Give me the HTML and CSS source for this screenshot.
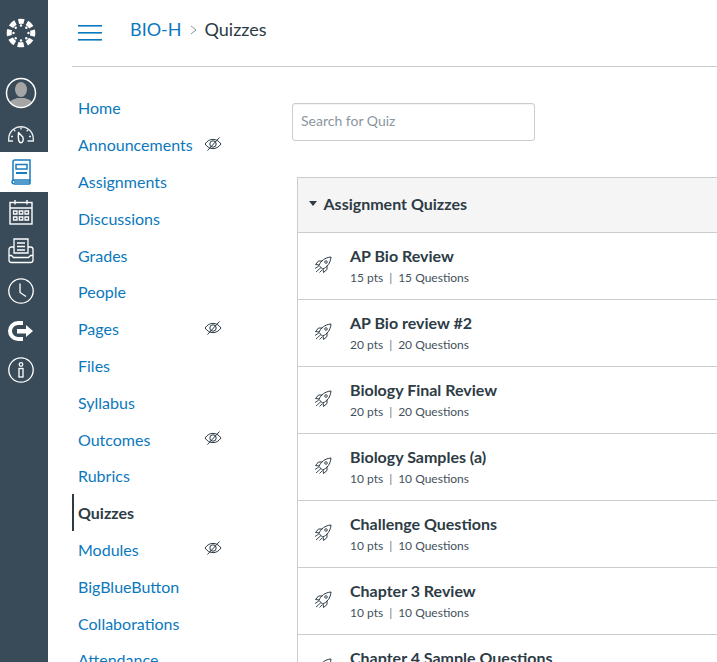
FILE: index.html
```html
<!DOCTYPE html>
<html lang="en">
<head>
<meta charset="utf-8">
<title>Quizzes</title>
<link rel="stylesheet" href="styles.css">
</head>
<body>
<svg class="defs" width="0" height="0" aria-hidden="true">
  <symbol id="eye" viewBox="0 0 18 16">
    <path d="M1 8C3.500 4.600 6 3.400 9 3.400S14.500 4.600 17 8C14.500 11.400 12 12.600 9 12.600S3.500 11.400 1 8Z" fill="none" stroke="#2d3b45" stroke-width="1"/>
    <circle cx="9" cy="8" r="3.200" fill="none" stroke="#2d3b45" stroke-width="1"/>
    <path d="M3.500 14.500L15.500 1.500" fill="none" stroke="#2d3b45" stroke-width="1"/>
  </symbol>
  <symbol id="rocket" viewBox="0 0 18 18">
    <path d="M5 9.500C6.500 5 11 1.500 17 1C16.500 7 13 11.500 8.500 13Z" fill="none" stroke="#2d3b45" stroke-width="1" stroke-linejoin="round"/>
    <path d="M5.200 9L1.500 8.500L4.500 5L8.300 5M9 12.800L9.500 16.500L13 13.500L13 9.700" fill="none" stroke="#2d3b45" stroke-width="1" stroke-linejoin="round"/>
    <circle cx="12" cy="6" r="1.300" fill="none" stroke="#2d3b45" stroke-width="0.900"/>
    <path d="M1 12.500L4.800 10M2 16L7 11.500M5.500 16.500L8 14" fill="none" stroke="#2d3b45" stroke-width="0.900"/>
  </symbol>
</svg>

<nav class="rail">
  <div class="rail-logo">
    <svg width="30" height="30" viewBox="0 0 30 30">
      <circle cx="15" cy="15" r="11.800" fill="none" stroke="#fff" stroke-width="5" stroke-dasharray="6.100 3.170" stroke-dashoffset="3.050" transform="rotate(-90 15 15)"/>
      <g fill="#fff">
        <circle cx="15" cy="7.500" r="1.200"/><circle cx="20.300" cy="9.700" r="1.200"/><circle cx="22.500" cy="15" r="1.200"/><circle cx="20.300" cy="20.300" r="1.200"/><circle cx="15" cy="22.500" r="1.200"/><circle cx="9.700" cy="20.300" r="1.200"/><circle cx="7.500" cy="15" r="1.200"/><circle cx="9.700" cy="9.700" r="1.200"/>
      </g>
    </svg>
  </div>
  <div class="rail-avatar">
    <svg width="32" height="32" viewBox="0 0 32 32">
      <defs><clipPath id="av"><circle cx="16" cy="16" r="14"/></clipPath></defs>
      <circle cx="16" cy="16" r="14" fill="#394b58"/>
      <g clip-path="url(#av)" fill="#a5a5a5">
        <ellipse cx="16" cy="12.500" rx="6" ry="7.500"/>
        <path d="M3 32C3 24 7 23 12 21L20 21C25 23 29 24 29 32Z"/>
      </g>
      <circle cx="16" cy="16" r="14.500" fill="none" stroke="#fff" stroke-width="1.500"/>
    </svg>
  </div>
  <div class="rail-item rail-dash">
    <svg width="28" height="20" viewBox="0 0 28 20" fill="none" stroke="#e8ebed" stroke-width="1.400">
      <path d="M6 17H1.700V15A12.300 12.300 0 0 1 26.300 15V17H20.500"/>
      <path d="M11.500 8.500L15.800 13C17 16 15.500 18.800 14 18.800C12 18.800 10.800 16 11.500 8.500Z" stroke-linejoin="round" stroke="#fff"/>
      <path d="M14 3.500V5.500M7 6L8.300 7.300M21 6L19.700 7.300M4 12.500H6M22 12.500H24"/>
    </svg>
  </div>
  <div class="rail-item rail-active">
    <svg width="22" height="26" viewBox="0 0 22 26" fill="none" stroke="#1a7cbd" stroke-width="1.500">
      <path d="M3 21V3C3 1.800 3.800 1 5 1H20V21H5C3.500 21 2 21.500 2 23S3.500 25 5 25H20"/>
      <path d="M20 21V25M4 23H20"/>
      <rect x="6" y="5.500" width="11" height="4.500" stroke-width="1.500"/>
      <path d="M6 14H17" stroke-width="2"/>
    </svg>
  </div>
  <div class="rail-item">
    <svg width="24" height="26" viewBox="0 0 24 26" fill="none" stroke="#fff" stroke-width="1.400">
      <rect x="1" y="3.500" width="22" height="21.500"/>
      <path d="M1 9H23M6 1V5.500M18 1V5.500"/>
      <g stroke-width="1.300">
        <path d="M4.500 12h3.500v3h-3.500zM10.300 12h3.500v3h-3.500zM16 12h3.500v3h-3.500zM4.500 18h3.500v3h-3.500zM10.300 18h3.500v3h-3.500zM16 18h3.500v3h-3.500z"/>
      </g>
    </svg>
  </div>
  <div class="rail-item">
    <svg width="26" height="26" viewBox="0 0 26 26" fill="none" stroke="#fff" stroke-width="1.300">
      <path d="M6 1H20V15H6Z"/>
      <path d="M9 5H17M9 8.500H17M9 12H17"/>
      <path d="M6 9H3.500C2 9 1 10 1 11.500V22C1 23.500 2 24.500 3.500 24.500H22.500C24 24.500 25 23.500 25 22V11.500C25 10 24 9 22.500 9H20"/>
      <path d="M1 17.500H3.500L5.500 19.500H20.500L22.500 17.500H25"/>
    </svg>
  </div>
  <div class="rail-item">
    <svg width="26" height="26" viewBox="0 0 26 26" fill="none" stroke="#fff" stroke-width="1.300">
      <circle cx="13" cy="13" r="12.200"/>
      <path d="M12 5.500V14.500L18 18.500"/>
    </svg>
  </div>
  <div class="rail-item">
    <svg width="26" height="22" viewBox="0 0 26 22">
      <path d="M15 3H10A8 8 0 0 0 10 19H15" fill="none" stroke="#fff" stroke-width="4"/>
      <path d="M9 9H18V5L25 11L18 17V13.500H9Z" fill="#fff"/>
    </svg>
  </div>
  <div class="rail-item">
    <svg width="26" height="26" viewBox="0 0 26 26" fill="none" stroke="#fff" stroke-width="1.300">
      <circle cx="13" cy="13" r="12.200"/>
      <circle cx="13" cy="7.500" r="1.800"/>
      <rect x="11" y="11.500" width="4" height="8.500"/>
    </svg>
  </div>
</nav>

<div class="main">
  <header class="topbar">
    <svg class="burger" width="24" height="16" viewBox="0 0 24 16" fill="#0c78bd">
      <rect y="0" width="24" height="1.600"/><rect y="7" width="24" height="1.600"/><rect y="14" width="24" height="1.600"/>
    </svg>
    <div class="crumbs">
      <a class="crumb-link">BIO-H</a>
      <svg class="crumb-sep" width="7" height="10" viewBox="0 0 7 10" fill="none" stroke="#8b969e" stroke-width="1"><path d="M1 1L6 5L1 9"/></svg>
      <span class="crumb-cur">Quizzes</span>
    </div>
  </header>
  <div class="body">
    <ul class="coursenav">
      <li class="nav-item">Home</li>
      <li class="nav-item">Announcements<svg class="eye" width="18" height="16"><use href="#eye"/></svg></li>
      <li class="nav-item">Assignments</li>
      <li class="nav-item">Discussions</li>
      <li class="nav-item">Grades</li>
      <li class="nav-item">People</li>
      <li class="nav-item">Pages<svg class="eye" width="18" height="16"><use href="#eye"/></svg></li>
      <li class="nav-item">Files</li>
      <li class="nav-item">Syllabus</li>
      <li class="nav-item">Outcomes<svg class="eye" width="18" height="16"><use href="#eye"/></svg></li>
      <li class="nav-item">Rubrics</li>
      <li class="nav-item nav-current">Quizzes</li>
      <li class="nav-item">Modules<svg class="eye" width="18" height="16"><use href="#eye"/></svg></li>
      <li class="nav-item">BigBlueButton</li>
      <li class="nav-item">Collaborations</li>
      <li class="nav-item">Attendance</li>
    </ul>
    <section class="content">
      <input class="search" type="text" placeholder="Search for Quiz">
      <div class="panel">
        <div class="panel-head">
          <svg class="caret" width="8" height="5" viewBox="0 0 8 5"><path d="M0 0H8L4 5Z" fill="#2d3b45"/></svg>
          <span>Assignment Quizzes</span>
        </div>
        <div class="quiz"><svg class="rocket" width="18" height="18"><use href="#rocket"/></svg><div><div class="quiz-title">AP Bio Review</div><div class="quiz-meta">15 pts<i>|</i>15 Questions</div></div></div>
        <div class="quiz"><svg class="rocket" width="18" height="18"><use href="#rocket"/></svg><div><div class="quiz-title">AP Bio review #2</div><div class="quiz-meta">20 pts<i>|</i>20 Questions</div></div></div>
        <div class="quiz"><svg class="rocket" width="18" height="18"><use href="#rocket"/></svg><div><div class="quiz-title">Biology Final Review</div><div class="quiz-meta">20 pts<i>|</i>20 Questions</div></div></div>
        <div class="quiz"><svg class="rocket" width="18" height="18"><use href="#rocket"/></svg><div><div class="quiz-title">Biology Samples (a)</div><div class="quiz-meta">10 pts<i>|</i>10 Questions</div></div></div>
        <div class="quiz"><svg class="rocket" width="18" height="18"><use href="#rocket"/></svg><div><div class="quiz-title">Challenge Questions</div><div class="quiz-meta">10 pts<i>|</i>10 Questions</div></div></div>
        <div class="quiz"><svg class="rocket" width="18" height="18"><use href="#rocket"/></svg><div><div class="quiz-title">Chapter 3 Review</div><div class="quiz-meta">10 pts<i>|</i>10 Questions</div></div></div>
        <div class="quiz"><svg class="rocket" width="18" height="18"><use href="#rocket"/></svg><div><div class="quiz-title">Chapter 4 Sample Questions</div><div class="quiz-meta">10 pts<i>|</i>10 Questions</div></div></div>
      </div>
    </section>
  </div>
</div>
</body>
</html>
```

FILE: styles.css
```css
html, body {
  margin: 0;
  height: 662px;
  overflow: hidden;
  background: #fff;
}
body {
  display: flex;
  font-family: Lato, "Liberation Sans", sans-serif;
  color: #2d3b45;
}
.defs { position: absolute; }

.rail {
  flex: 0 0 42px;
  width: 42px;
  padding-right: 6px;
  background: #394b58;
  display: flex;
  flex-direction: column;
  align-items: stretch;
}
.rail-logo {
  height: 77px;
  padding-top: 18px;
  box-sizing: border-box;
  display: flex;
  justify-content: center;
}
.rail-avatar {
  height: 38px;
  display: flex;
  justify-content: center;
  align-items: flex-start;
}
.rail-item {
  height: 39.700px;
  display: flex;
  align-items: center;
  justify-content: center;
}
.rail-dash { height: 37px; }
.rail-active {
  background: #fff;
  margin-right: -6px;
  padding-right: 6px;
}

.main {
  flex: 1;
  min-width: 0;
  display: flex;
  flex-direction: column;
}
.topbar {
  height: 66px;
  margin-left: 24px;
  border-bottom: 1px solid #c7cdd1;
  display: flex;
  align-items: center;
  padding-left: 6px;
  font-size: 18px;
}
.burger { margin-right: 28px; }
.crumbs {
  display: flex;
  align-items: center;
  margin-bottom: 8px;
}
.crumb-link { color: #0c78bd; }
.crumb-sep { margin: 2px 8px 0 8px; }
.crumb-cur { color: #2d3b45; }

.body {
  display: flex;
  flex: 1;
  min-height: 0;
}
.coursenav {
  list-style: none;
  margin: 22.500px 0 0 24px;
  padding: 0;
  width: 220px;
  flex: none;
}
.nav-item {
  height: 36.800px;
  display: flex;
  align-items: center;
  justify-content: space-between;
  box-sizing: border-box;
  padding: 0 25px 0 6px;
  font-size: 16px;
  color: #0c78bd;
  width: 175px;
}
.nav-item .eye { flex: none; margin-top: -2px; }
.nav-current {
  font-weight: 700;
  color: #2d3b45;
  border-left: 2px solid #2d3b45;
  padding-left: 4px;
}

.content {
  flex: 1;
  min-width: 0;
  padding-top: 36px;
}
.search {
  display: block;
  width: 243px;
  height: 38px;
  box-sizing: border-box;
  margin: 0;
  padding: 0 8px 3px;
  border: 1px solid #c7cdd1;
  border-radius: 3px;
  box-shadow: inset 0 1px 1px rgba(0, 0, 0, 0.05);
  font: 14px Lato, sans-serif;
  color: #2d3b45;
  background: #fff;
}
.search::placeholder { color: #8b969e; opacity: 1; }

.panel {
  margin: 36px 0 0 5px;
  border: 1px solid #c7cdd1;
  border-right: 0;
}
.panel-head {
  height: 54px;
  background: #f5f5f5;
  display: flex;
  align-items: center;
  padding: 0 0 3px 11px;
  box-sizing: border-box;
  font-size: 16px;
  font-weight: 700;
}
.caret { margin-right: 6.500px; }
.quiz {
  height: 66px;
  border-top: 1px solid #c7cdd1;
  display: flex;
  align-items: flex-start;
  padding-left: 16px;
}
.rocket { margin-top: 23px; margin-right: 18px; flex: none; }
.quiz-title {
  margin-top: 12px;
  font-size: 16px;
  font-weight: 700;
  line-height: 21px;
}
.quiz-meta {
  margin-top: 4px;
  font-size: 12px;
  line-height: 16px;
  color: #44525c;
}
.quiz-meta i {
  font-style: normal;
  color: #6b7780;
  margin: 0 6px;
}
```
